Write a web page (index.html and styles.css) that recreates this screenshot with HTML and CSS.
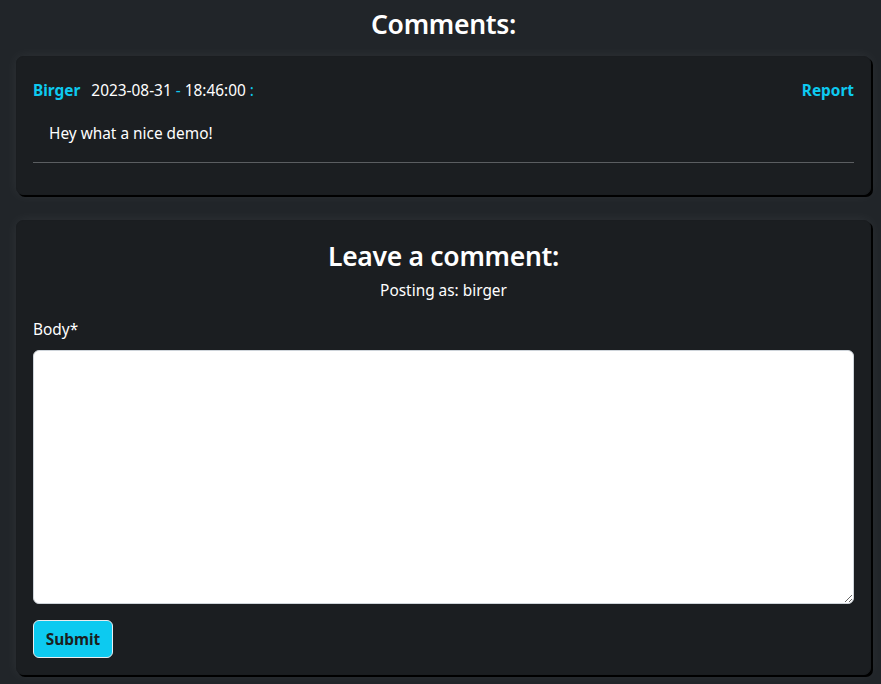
FILE: index.html
```html
<!DOCTYPE html>
<html lang="en">
<head>
<meta charset="utf-8">
<title>Comments</title>
<link rel="stylesheet" href="styles.css">
</head>
<body>
<main class="page">
  <h2 class="title">Comments:</h2>
  <section class="card comment-card">
    <div class="comment-head">
      <div class="meta">
        <span class="author">Birger</span>
        <span class="date">2023-08-31 <span class="accent">-</span> 18:46:00 <span class="accent">:</span></span>
      </div>
      <a class="report" href="#">Report</a>
    </div>
    <p class="comment-body">Hey what a nice demo!</p>
    <hr class="divider">
  </section>
  <section class="card form-card">
    <h3 class="form-title">Leave a comment:</h3>
    <p class="posting">Posting as: birger</p>
    <label class="label" for="body">Body*</label>
    <textarea id="body" class="textarea"></textarea>
    <button class="submit" type="button">Submit</button>
  </section>
</main>
</body>
</html>
```
FILE: styles.css
```css
* { box-sizing: border-box; }
html, body {
  margin: 0;
  background: #212529;
}
body {
  font-family: "Noto Sans", "Open Sans", sans-serif;
  font-size: 15.4px;
  color: #ffffff;
  height: 684px;
  overflow: hidden;
}
.page {
  padding: 0 10px 0 16px;
}
.title {
  margin: 0;
  padding-top: 7px;
  height: 56px;
  text-align: center;
  font-size: 26.5px;
  font-weight: 600;
  line-height: 34px;
  letter-spacing: -0.3px;
}
.card {
  background: #1b1e21;
  border: 1px solid #1a1d20;
  border-radius: 7px;
  box-shadow: 2px 2px 0 #000, 0 0 14px rgba(255, 255, 255, 0.06);
  padding: 0 16px;
}
.comment-card {
  padding-top: 22px;
  padding-bottom: 31px;
  margin-bottom: 25px;
}
.comment-head {
  display: flex;
  justify-content: space-between;
  align-items: center;
  height: 24px;
  line-height: 24px;
}
.meta { display: flex; gap: 11px; }
.author, .report {
  color: #0dcaf0;
  font-weight: 700;
  text-decoration: none;
}
.accent { color: #0dcaf0; }
.comment-body {
  margin: 19px 0 0 16px;
  line-height: 24px;
}
.divider {
  margin: 16px 0 0;
  border: 0;
  border-top: 1px solid #5b5e61;
}
.form-card {
  padding-top: 19px;
  padding-bottom: 16px;
}
.form-title {
  margin: 0;
  text-align: center;
  font-size: 26.5px;
  font-weight: 600;
  line-height: 32px;
  letter-spacing: -0.3px;
}
.posting {
  margin: 7px 0 0;
  text-align: center;
  line-height: 24px;
}
.label {
  display: block;
  margin-top: 15px;
  line-height: 24px;
}
.textarea {
  display: block;
  width: 100%;
  height: 254px;
  margin-top: 8px;
  border: 1px solid #ced4da;
  border-radius: 6px;
  background: #fff;
  resize: vertical;
  font: inherit;
}
.submit {
  margin-top: 16px;
  width: 80px;
  height: 38px;
  background: #0dcaf0;
  border: 1px solid #e9ecef;
  border-radius: 6px;
  color: #1b1e21;
  font-family: inherit;
  font-size: 15.4px;
  font-weight: 700;
}
```
